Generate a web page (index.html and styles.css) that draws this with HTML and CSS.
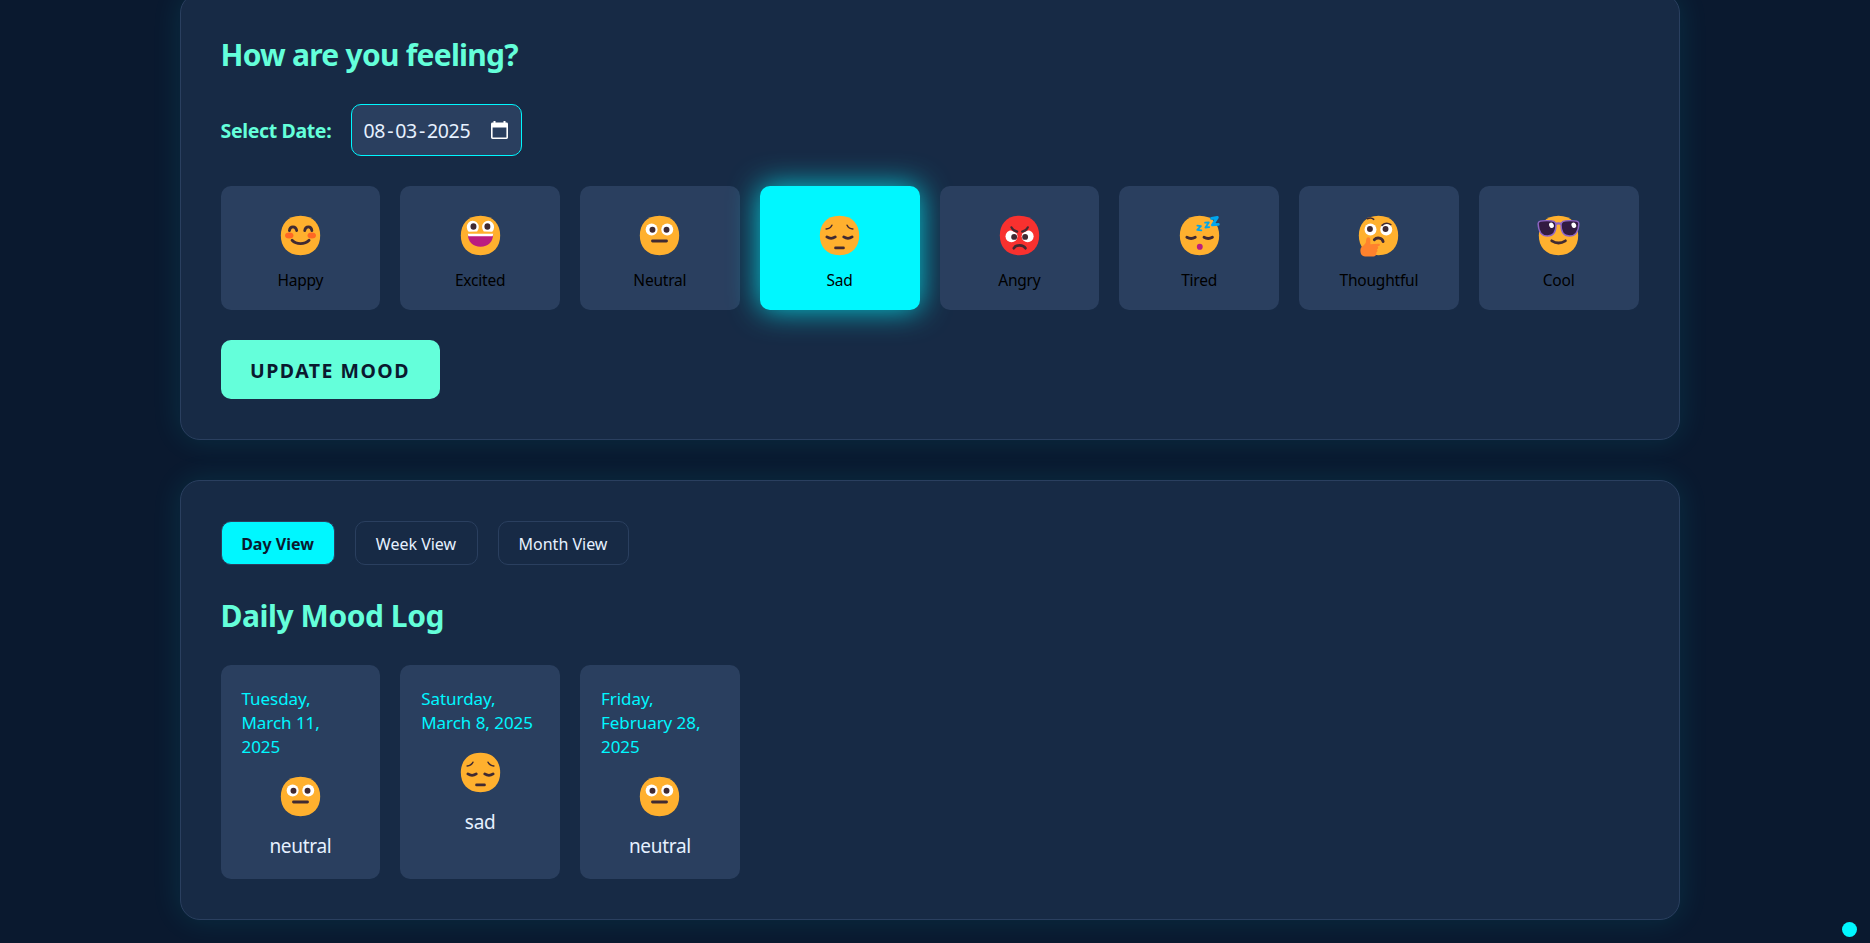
FILE: index.html
```
<!DOCTYPE html>
<html lang="en">
<head>
<meta charset="utf-8">
<title>Mood Tracker</title>
<link rel="stylesheet" href="styles.css">
</head>
<body>
<svg class="sprite" aria-hidden="true">
  <defs>
    <path id="face" d="M16 30C25.33 30 30 23.73 30 16C30 8.27 25.33 2 16 2C6.66 2 2 8.27 2 16C2 23.73 6.66 30 16 30Z"/>
    <symbol id="happy" viewBox="0 0 32 32">
      <use href="#face" fill="#ffb02e"/>
      <ellipse cx="8" cy="16" rx="3" ry="2.1" fill="#ff6723"/><ellipse cx="24" cy="16" rx="3" ry="2.1" fill="#ff6723"/>
      <path class="ink" d="M8.1 12.5C8.5 8.9 12.7 8.9 13.3 12.5M19 12.5C19.5 8.9 23.7 8.9 24.1 12.5M10 19.4C13 22.6 19 22.6 22.1 19.4"/>
    </symbol>
    <symbol id="excited" viewBox="0 0 32 32">
      <use href="#face" fill="#ffb02e"/>
      <path fill="#fff" d="M7.6 13.3A4.25 4.5 0 1 1 13.6 13.1ZM18.3 13.1A4.25 4.5 0 1 1 24.3 13.3Z"/>
      <ellipse cx="11" cy="9.6" rx="2.1" ry="2.3" fill="#402a32"/><ellipse cx="20.9" cy="9.6" rx="2.1" ry="2.3" fill="#402a32"/>
      <path fill="#bb1d80" d="M7 15H25C25 20.5 21.5 24 16 24S7 20.5 7 15Z"/>
      <path fill="#fff" d="M7 14.7H25Q25 15.7 24.6 16.5H7.4Q7 15.7 7 14.7Z"/>
    </symbol>
    <symbol id="neutral" viewBox="0 0 32 32">
      <use href="#face" fill="#ffb02e"/>
      <circle cx="10.4" cy="11.8" r="4.25" fill="#fff"/><circle cx="21.5" cy="11.8" r="4.25" fill="#fff"/>
      <circle cx="11" cy="11.9" r="2.1" fill="#402a32"/><circle cx="21" cy="11.9" r="2.1" fill="#402a32"/>
      <path class="ink" d="M11 19.9H21"/>
    </symbol>
    <symbol id="sad" viewBox="0 0 32 32">
      <use href="#face" fill="#ffb02e"/>
      <path class="ink thin" d="M6.5 11.4Q9.4 11.2 10.6 8.7M25.5 11.4Q22.6 11.2 21.4 8.7"/>
      <path class="ink" d="M7 17Q10 19 13 17M19 17Q22 19 25 17M13.2 24.8H18.8"/>
    </symbol>
    <symbol id="angry" viewBox="0 0 32 32">
      <use href="#face" fill="#f8312f"/>
      <circle cx="10.3" cy="16.6" r="4.25" fill="#fff"/><circle cx="21.8" cy="16.6" r="4.25" fill="#fff"/>
      <path fill="#f8312f" d="M9.2 9.5V11.9L14.4 14.6L17.6 14.6L23 11.9V9.5Z"/>
      <circle cx="12.2" cy="17" r="2.1" fill="#402a32"/><circle cx="20" cy="17" r="2.1" fill="#402a32"/>
      <path class="ink mid" d="M10.3 10.2Q11.4 12.6 14.3 13.2M21.9 10.2Q20.8 12.6 17.9 13.2"/>
      <path class="ink" d="M12 25C13.5 22.3 18.7 22.3 20.2 25"/>
    </symbol>
    <symbol id="tired" viewBox="0 0 32 32">
      <use href="#face" fill="#ffb02e"/>
      <path class="ink" d="M7 17.2Q10 19 13 17.2M19.2 17.2Q22.2 19 25.2 17.2"/>
      <ellipse cx="16.2" cy="24" rx="2.1" ry="2.2" fill="#bb1d80"/>
      <path class="zed" stroke-width="1.3" d="M14.5 9L17 9.3L14.4 12L17.3 12.3"/>
      <path class="zed" stroke-width="1.3" d="M20 6.9L22.6 6.7L20.2 10.3L22.9 10"/>
      <path class="zed" stroke-width="2" d="M24.6 3.9L28.7 3.2L25.2 8.5L29.4 8.1"/>
    </symbol>
    <symbol id="thoughtful" viewBox="0 0 32 32">
      <use href="#face" fill="#ffb02e"/>
      <circle cx="10.3" cy="11.7" r="4.25" fill="#fff"/><circle cx="21.5" cy="11.7" r="4.25" fill="#fff"/>
      <circle cx="9.9" cy="11.4" r="2.1" fill="#402a32"/><circle cx="21" cy="11.4" r="2.1" fill="#402a32"/>
      <path class="ink thin" d="M8 4.1Q10.8 2.8 12.6 4.5M18.5 8.8Q21.4 6 24.8 8.3"/>
      <path class="ink" d="M13 19C14.8 17 18.6 17.5 19.3 20.3"/>
      <path fill="#ff822d" d="M8.8 17.2C9.9 17.2 10.2 18.4 10.2 19.8V22.3L15.9 21.8C17.3 21.7 17.4 23.2 16.2 23.5L15.2 23.8C16 24.3 15.9 25.6 14.9 25.9C15.5 26.6 15.3 27.7 14.4 28C14.8 29.2 14 30.9 12.5 30.9H6.5C4.2 30.9 3.1 29 3.1 26.6C3.1 23.4 7.1 23 7.1 20.3C7.1 18.6 7.6 17.2 8.8 17.2Z"/>
    </symbol>
    <symbol id="cool" viewBox="0 0 32 32">
      <use href="#face" fill="#ffb02e"/>
      <path class="ink" d="M11.2 19.8Q16 22.9 20.9 19.8"/>
      <path fill="none" stroke="#8d65c5" stroke-width="1.7" d="M13.5 7.9Q16 6.9 18.5 7.9"/>
      <path fill="#321b41" stroke="#8d65c5" stroke-width="1" d="M1.5 7.6C1.4 5.8 3.6 5.4 7.8 5.4C12.4 5.4 14.2 6 14.2 8.6C14.2 13.6 12.6 16.4 8.2 16.4C3.3 16.4 1.8 12.7 1.5 7.6ZM30.5 7.6C30.6 5.8 28.4 5.4 24.2 5.4C19.6 5.4 17.8 6 17.8 8.6C17.8 13.6 19.4 16.4 23.8 16.4C28.7 16.4 30.2 12.7 30.5 7.6Z"/>
      <ellipse cx="11" cy="8.7" rx="1.6" ry="2" transform="rotate(-25 11 8.7)" fill="#fff"/><ellipse cx="26.9" cy="8.7" rx="1.6" ry="2" transform="rotate(-25 26.9 8.7)" fill="#fff"/>
    </symbol>
  </defs>
</svg>
<main class="page">
  <section class="panel">
    <h2 class="title">How are you feeling?</h2>
    <div class="date-row">
      <span class="date-label">Select Date:</span>
      <div class="date-input">
        <span class="date-value">08<i>-</i>03<i>-</i>2025</span>
        <svg class="calendar" viewBox="0 0 17 18"><path fill="#fff" fill-rule="evenodd" d="M2.5 0H4.5V1.6H12.5V0H14.5V1.6H15.5Q17 1.6 17 3V16.6Q17 18 15.5 18H1.5Q0 18 0 16.6V3Q0 1.6 1.5 1.6H2.5ZM1.6 6.4V16.4H15.4V6.4Z"/></svg>
      </div>
    </div>
    <div class="grid moods">
      <button class="mood"><svg class="emoji"><use href="#happy"/></svg><span>Happy</span></button>
      <button class="mood"><svg class="emoji"><use href="#excited"/></svg><span>Excited</span></button>
      <button class="mood"><svg class="emoji"><use href="#neutral"/></svg><span>Neutral</span></button>
      <button class="mood selected"><svg class="emoji"><use href="#sad"/></svg><span>Sad</span></button>
      <button class="mood"><svg class="emoji"><use href="#angry"/></svg><span>Angry</span></button>
      <button class="mood"><svg class="emoji"><use href="#tired"/></svg><span>Tired</span></button>
      <button class="mood"><svg class="emoji"><use href="#thoughtful"/></svg><span>Thoughtful</span></button>
      <button class="mood"><svg class="emoji"><use href="#cool"/></svg><span>Cool</span></button>
    </div>
    <button class="update">UPDATE MOOD</button>
  </section>
  <section class="panel">
    <div class="tabs">
      <button class="tab active">Day View</button>
      <button class="tab week">Week View</button>
      <button class="tab month">Month View</button>
    </div>
    <h2 class="title log-title">Daily Mood Log</h2>
    <div class="grid">
      <article class="entry"><div class="day">Tuesday,<br>March 11,<br>2025</div><svg class="emoji"><use href="#neutral"/></svg><div class="name">neutral</div></article>
      <article class="entry"><div class="day">Saturday,<br>March 8, 2025</div><svg class="emoji"><use href="#sad"/></svg><div class="name">sad</div></article>
      <article class="entry"><div class="day">Friday,<br>February 28,<br>2025</div><svg class="emoji"><use href="#neutral"/></svg><div class="name">neutral</div></article>
    </div>
  </section>
</main>
<span class="dot"></span>
</body>
</html>
```
FILE: styles.css
```
* { box-sizing: border-box; }
html { overflow: hidden; }
body {
  margin: 0;
  height: 943px;
  overflow: hidden;
  background: #0a192f;
  color: #e6f1ff;
  font-family: "Noto Sans", "Open Sans", sans-serif;
}
button { font: inherit; border: 0; padding: 0; margin: 0; }
.sprite { display: none; }
.ink { fill: none; stroke: #402a32; stroke-width: 2; stroke-linecap: round; }
.ink.thin { stroke-width: 1.1; }
.ink.mid { stroke-width: 1.6; }
.zed { fill: none; stroke: #00a6ed; stroke-linejoin: round; stroke-linecap: round; }
.page {
  width: 1500px;
  margin: -7px 0 0 179.5px;
  display: flex;
  flex-direction: column;
  gap: 40px;
}
.panel {
  padding: 40px;
  border: 1px solid #2a3f5f;
  border-radius: 20px;
  background: #172a45;
  box-shadow: 0 0 30px rgba(0, 247, 255, 0.1);
}
.title {
  margin: 0 0 29px;
  padding-top: 1px;
  font-size: 30px;
  line-height: 40px;
  font-weight: 700;
  letter-spacing: -0.75px;
  color: #64ffda;
}
.log-title { letter-spacing: -0.45px; }
.date-row { display: flex; align-items: center; height: 52px; margin-bottom: 30px; }
.date-label {
  width: 130px;
  padding-top: 2px;
  font-size: 19.5px;
  font-weight: 700;
  letter-spacing: -0.35px;
  line-height: 28px;
  color: #64ffda;
  white-space: nowrap;
}
.date-input {
  width: 171px;
  height: 52px;
  display: flex;
  align-items: center;
  justify-content: space-between;
  padding: 0 13px 0 12px;
  border: 1px solid #00f7ff;
  border-radius: 10px;
  background: #2a3f5f;
}
.date-value { padding-top: 2px; font-size: 19.5px; line-height: 28px; letter-spacing: -0.3px; white-space: nowrap; }
.date-value i { font-style: normal; padding: 0 2px; }
.calendar { width: 17px; height: 18px; display: block; }
.grid { display: grid; grid-template-columns: repeat(8, 1fr); gap: 20px; }
.moods { margin-bottom: 30px; }
.mood {
  height: 124px;
  display: flex;
  flex-direction: column;
  align-items: center;
  padding-top: 26.5px;
  border-radius: 10px;
  background: #2a3f5f;
  color: #000;
  font-size: 15.5px;
  line-height: 22px;
  letter-spacing: -0.2px;
}
.mood span { margin-top: 11.5px; }
.mood.selected { background: #00f7ff; box-shadow: 0 0 30px rgba(0, 247, 255, 0.8); }
.emoji { width: 45px; height: 45px; display: block; flex: none; }
.update {
  display: block;
  width: 219px;
  height: 59px;
  padding-top: 2px;
  border-radius: 10px;
  background: #64ffda;
  color: #0a192f;
  font-size: 19.5px;
  font-weight: 700;
  letter-spacing: 1.5px;
}
.tabs { display: flex; gap: 20px; margin-bottom: 30px; }
.tab {
  width: 114px;
  height: 44px;
  padding-top: 2px;
  border: 1px solid #2a3f5f;
  border-radius: 10px;
  background: transparent;
  color: #e6f1ff;
  font-size: 16px;
  letter-spacing: 0;
  white-space: nowrap;
}
.tab.week { width: 123px; }
.tab.month { width: 131px; }
.tab.active { background: #00f7ff; color: #0a192f; font-weight: 700; }
.entry {
  height: 214px;
  display: flex;
  flex-direction: column;
  align-items: center;
  padding: 22px 20px 0;
  border-radius: 10px;
  background: #2a3f5f;
}
.day {
  align-self: stretch;
  padding-left: 1px;
  color: #00f7ff;
  font-size: 17px;
  line-height: 24px;
  letter-spacing: -0.05px;
  white-space: nowrap;
}
.entry .emoji { margin-top: 15px; }
.name { margin-top: 13px; font-size: 19px; line-height: 28px; letter-spacing: -0.3px; }
.dot {
  position: absolute;
  left: 1841.5px;
  top: 921.5px;
  width: 15px;
  height: 15px;
  border-radius: 50%;
  background: #00f7ff;
}
```
